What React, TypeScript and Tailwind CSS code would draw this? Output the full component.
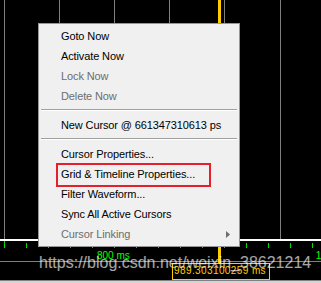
import React from "react";

type Item = { label: string; disabled?: boolean; submenu?: boolean } | "sep";

const items: Item[] = [
  { label: "Goto Now" },
  { label: "Activate Now" },
  { label: "Lock Now", disabled: true },
  { label: "Delete Now", disabled: true },
  "sep",
  { label: "New Cursor @ 661347310613 ps" },
  "sep",
  { label: "Cursor Properties..." },
  { label: "Grid & Timeline Properties..." },
  { label: "Filter Waveform..." },
  { label: "Sync All Active Cursors" },
  { label: "Cursor Linking", disabled: true, submenu: true },
];

const gridX = [4, 59, 114, 169, 224, 280];
const ticks = Array.from({ length: 15 }, (_, i) => i);

const ContextMenu = () => {
  return (
    <div className="absolute left-[38px] top-[23px] flex w-[202px] flex-col border border-[#979797] bg-[#f0f0f0] py-[2px] text-[11px] tracking-[-0.12px] text-black">
      {items.map((item, i) =>
        item === "sep" ? (
          <div key={i} className="flex h-[9px] flex-col px-[2px] pt-[3px]">
            <div className="h-px bg-[#a0a0a0]" />
            <div className="h-px bg-white" />
          </div>
        ) : (
          <div
            key={i}
            className={`flex h-[20px] items-center pl-[22px] pr-[9px] leading-[20px] ${
              item.disabled ? "text-[#6d6d6d]" : "text-black"
            }`}
          >
            <span>{item.label}</span>
            {item.submenu && (
              <svg className="ml-auto" width="4" height="7" viewBox="0 0 4 7">
                <polygon points="0,0 4,3.5 0,7" fill="#6d6d6d" />
              </svg>
            )}
          </div>
        )
      )}
    </div>
  );
};

const App = () => {
  return (
    <div className="relative flex h-[283px] w-[321px] flex-col overflow-hidden bg-black font-['Liberation_Sans',Arial,sans-serif]">
      {/* waveform pane */}
      <div className="h-[239px]">
        <svg width="321" height="239">
          {gridX.map((x) => (
            <rect key={x} x={x} y={0} width={1} height={239} fill="#7f7f7f" />
          ))}
        </svg>
      </div>
      <div className="h-[2px] bg-white" />

      {/* timeline ruler */}
      <div className="relative h-[39px]">
        <svg className="absolute inset-0" width="321" height="39">
          {ticks.map((i) => (
            <rect
              key={i}
              x={4 + i * 22}
              y={i % 5 === 0 ? 0 : 2}
              width={1}
              height={i % 5 === 0 ? 7 : 5}
              fill="#00e000"
            />
          ))}
          <rect x={0} y={20} width={321} height={1} fill="#7f7f7f" />
        </svg>
        <div className="flex w-max pl-[97px] pt-[10px] text-[10px] leading-[10px] text-[#00ff00]">
          <span className="shrink-0 whitespace-nowrap">800 ms</span>
          <span className="ml-[186px] shrink-0 whitespace-nowrap">1000 ms</span>
        </div>
      </div>
      <div className="h-px bg-[#808080]" />
      <div className="h-[2px] bg-[#d4d4d4]" />

      {/* active cursor */}
      <div className="absolute left-[218px] top-0 h-[263px] w-[3px] bg-[#ffcc00]" />
      <div className="absolute left-[172px] top-[263px] h-[17px] w-[98px] border border-[#ffcc00] bg-black pl-px pt-[2px] text-[10px] leading-[10px] tracking-[0.4px] text-[#ffcc00]">
        989.303100259 ms
      </div>

      <ContextMenu />

      {/* annotation */}
      <div className="absolute left-[56px] top-[163px] h-[24px] w-[155px] border-2 border-[#e3202b]" />

      {/* watermark */}
      <div className="pointer-events-none absolute left-[39px] top-[255px] whitespace-nowrap text-[16px] leading-[16px] text-white/65">
        https://blog.csdn.net/weixin_38621214
      </div>
    </div>
  );
};

export default App;
